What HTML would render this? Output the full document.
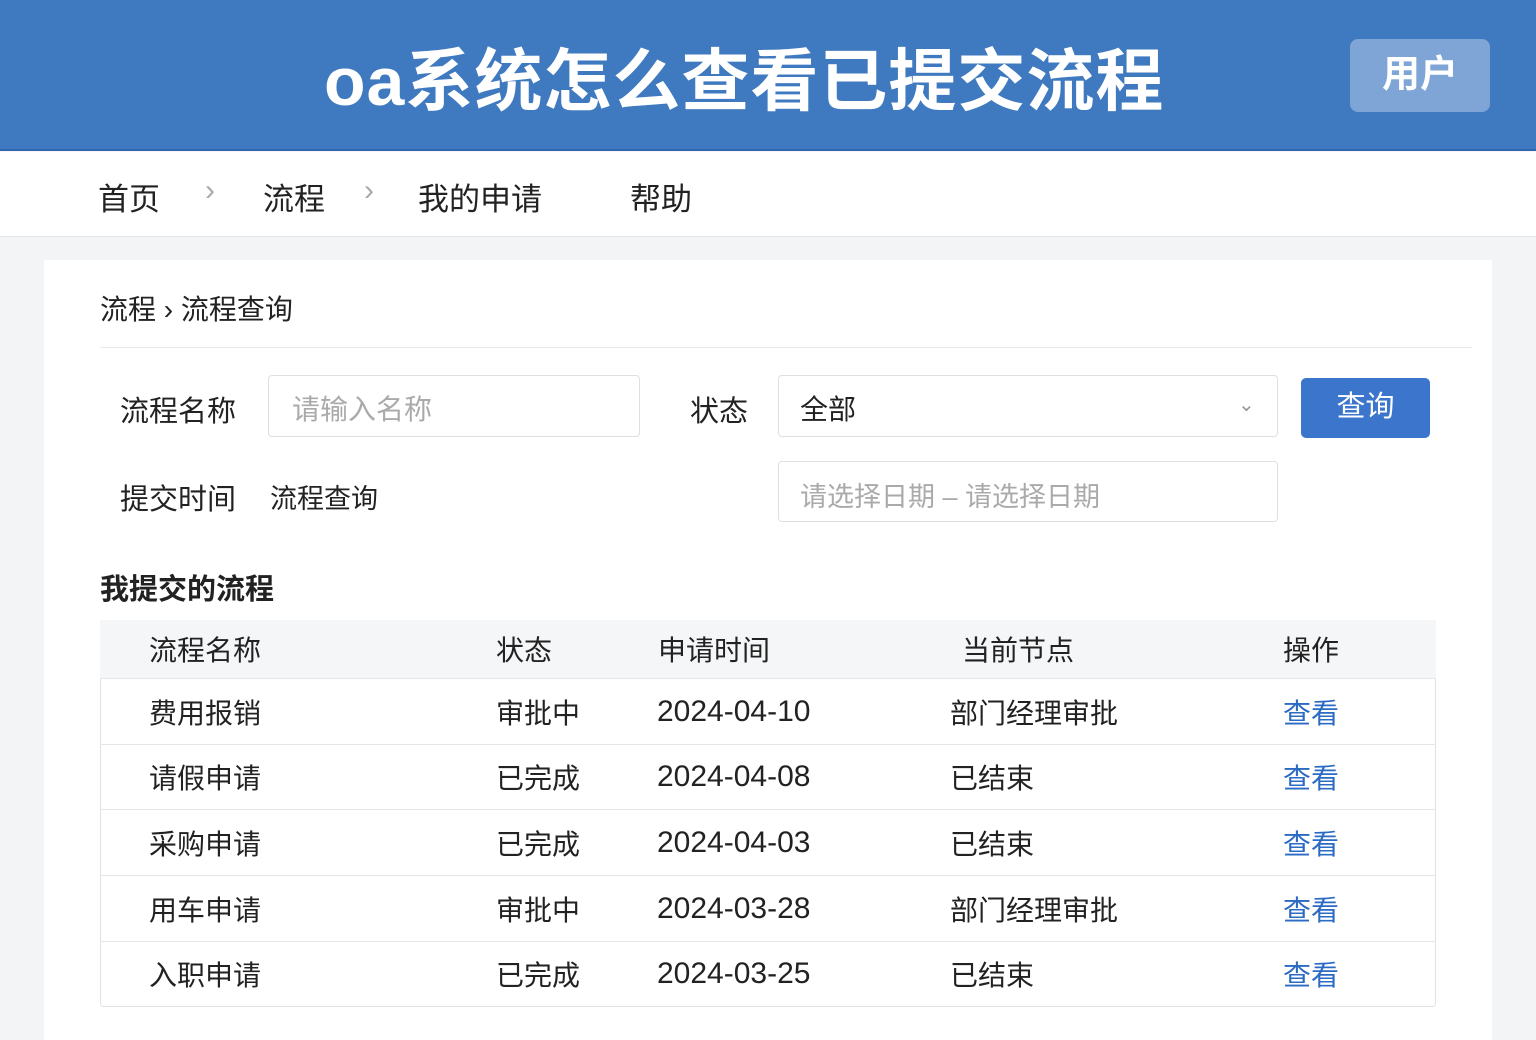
<!DOCTYPE html><html><head><meta charset="utf-8"><style>
*{margin:0;padding:0;box-sizing:border-box}
body{width:1536px;height:1024px;overflow:hidden;background:#f3f4f6;font-family:"Liberation Sans","Noto Sans CJK SC",sans-serif;color:#222;position:relative}
.a{position:absolute;white-space:nowrap}
#hd{position:absolute;left:0;top:0;width:1536px;height:151px;background:#3f79bf;border-bottom:2px solid #2f66ad}
#nav{position:absolute;left:0;top:152px;width:1536px;height:85px;background:#fff;border-bottom:1px solid #e2e4e8}
#card{position:absolute;left:44px;top:260px;width:1448px;height:780px;background:#fff}
.inp{position:absolute;border:1px solid #dcdfe4;border-radius:4px;background:#fff}
.ph{color:#aaa}
.row{position:absolute;left:100px;width:1336px;border-bottom:1px solid #e4e6ea}
.c{position:absolute;font-size:28px;color:#222;top:50%;transform:translateY(-50%)}
.n{font-size:30px}
.lk{color:#2c6bc4}
</style></head><body>
<div id="hd"></div>
<div class="a" style="left:324px;top:26px;font-size:68px;font-weight:bold;color:#fff;letter-spacing:1px">oa系统怎么查看已提交流程</div>
<div class="a" style="left:1350px;top:39px;width:140px;height:73px;background:#7fa5d6;border-radius:8px;color:#fff;font-size:38px;font-weight:bold;text-align:center;line-height:73px">用户</div>
<div id="nav"></div>
<div class="a" style="left:98px;top:174px;font-size:31px">首页</div>
<div class="a" style="left:205px;top:174px;font-size:30px;color:#aaa">›</div>
<div class="a" style="left:263px;top:174px;font-size:31px">流程</div>
<div class="a" style="left:364px;top:174px;font-size:30px;color:#aaa">›</div>
<div class="a" style="left:418px;top:174px;font-size:31px">我的申请</div>
<div class="a" style="left:630px;top:174px;font-size:31px">帮助</div>
<div id="card"></div>
<div class="a" style="left:100px;top:288px;font-size:28px">流程 › 流程查询</div>
<div class="a" style="left:100px;top:347px;width:1372px;height:1px;background:#e6e8eb"></div>
<div class="a" style="left:120px;top:388px;font-size:29px">流程名称</div>
<div class="inp" style="left:268px;top:375px;width:372px;height:62px"></div>
<div class="a ph" style="left:292px;top:388px;font-size:28px">请输入名称</div>
<div class="a" style="left:690px;top:388px;font-size:29px">状态</div>
<div class="inp" style="left:778px;top:375px;width:500px;height:62px"></div>
<div class="a" style="left:800px;top:388px;font-size:28px">全部</div>
<div class="a" style="left:1238px;top:392px;font-size:20px;color:#999">⌄</div>
<div class="a" style="left:1301px;top:378px;width:129px;height:60px;background:#3c76cc;border-radius:5px;color:#fff;font-size:29px;text-align:center;line-height:58px">查询</div>
<div class="a" style="left:120px;top:476px;font-size:29px">提交时间</div>
<div class="a" style="left:270px;top:477px;font-size:27px">流程查询</div>
<div class="inp" style="left:778px;top:461px;width:500px;height:61px"></div>
<div class="a ph" style="left:800px;top:475px;font-size:27px">请选择日期 – 请选择日期</div>
<div class="a" style="left:100px;top:566px;font-size:29px;font-weight:bold">我提交的流程</div>
<div class="a" style="left:100px;top:620px;width:1336px;height:387px;border:1px solid #e0e2e6;border-radius:3px"></div>
<div class="row" style="top:620px;height:59px;background:#f5f6f8"><span class="c" style="left:49px">流程名称</span><span class="c" style="left:396px">状态</span><span class="c" style="left:558px">申请时间</span><span class="c" style="left:862px">当前节点</span><span class="c" style="left:1183px">操作</span></div>
<div class="row" style="top:679px;height:66px"><span class="c" style="left:49px">费用报销</span><span class="c" style="left:396px">审批中</span><span class="c n" style="left:557px">2024-04-10</span><span class="c" style="left:850px">部门经理审批</span><span class="c lk" style="left:1183px">查看</span></div>
<div class="row" style="top:745px;height:65px"><span class="c" style="left:49px">请假申请</span><span class="c" style="left:396px">已完成</span><span class="c n" style="left:557px">2024-04-08</span><span class="c" style="left:850px">已结束</span><span class="c lk" style="left:1183px">查看</span></div>
<div class="row" style="top:810px;height:66px"><span class="c" style="left:49px">采购申请</span><span class="c" style="left:396px">已完成</span><span class="c n" style="left:557px">2024-04-03</span><span class="c" style="left:850px">已结束</span><span class="c lk" style="left:1183px">查看</span></div>
<div class="row" style="top:876px;height:66px"><span class="c" style="left:49px">用车申请</span><span class="c" style="left:396px">审批中</span><span class="c n" style="left:557px">2024-03-28</span><span class="c" style="left:850px">部门经理审批</span><span class="c lk" style="left:1183px">查看</span></div>
<div class="row" style="top:942px;height:64px;border-bottom:none"><span class="c" style="left:49px">入职申请</span><span class="c" style="left:396px">已完成</span><span class="c n" style="left:557px">2024-03-25</span><span class="c" style="left:850px">已结束</span><span class="c lk" style="left:1183px">查看</span></div>
</body></html>
